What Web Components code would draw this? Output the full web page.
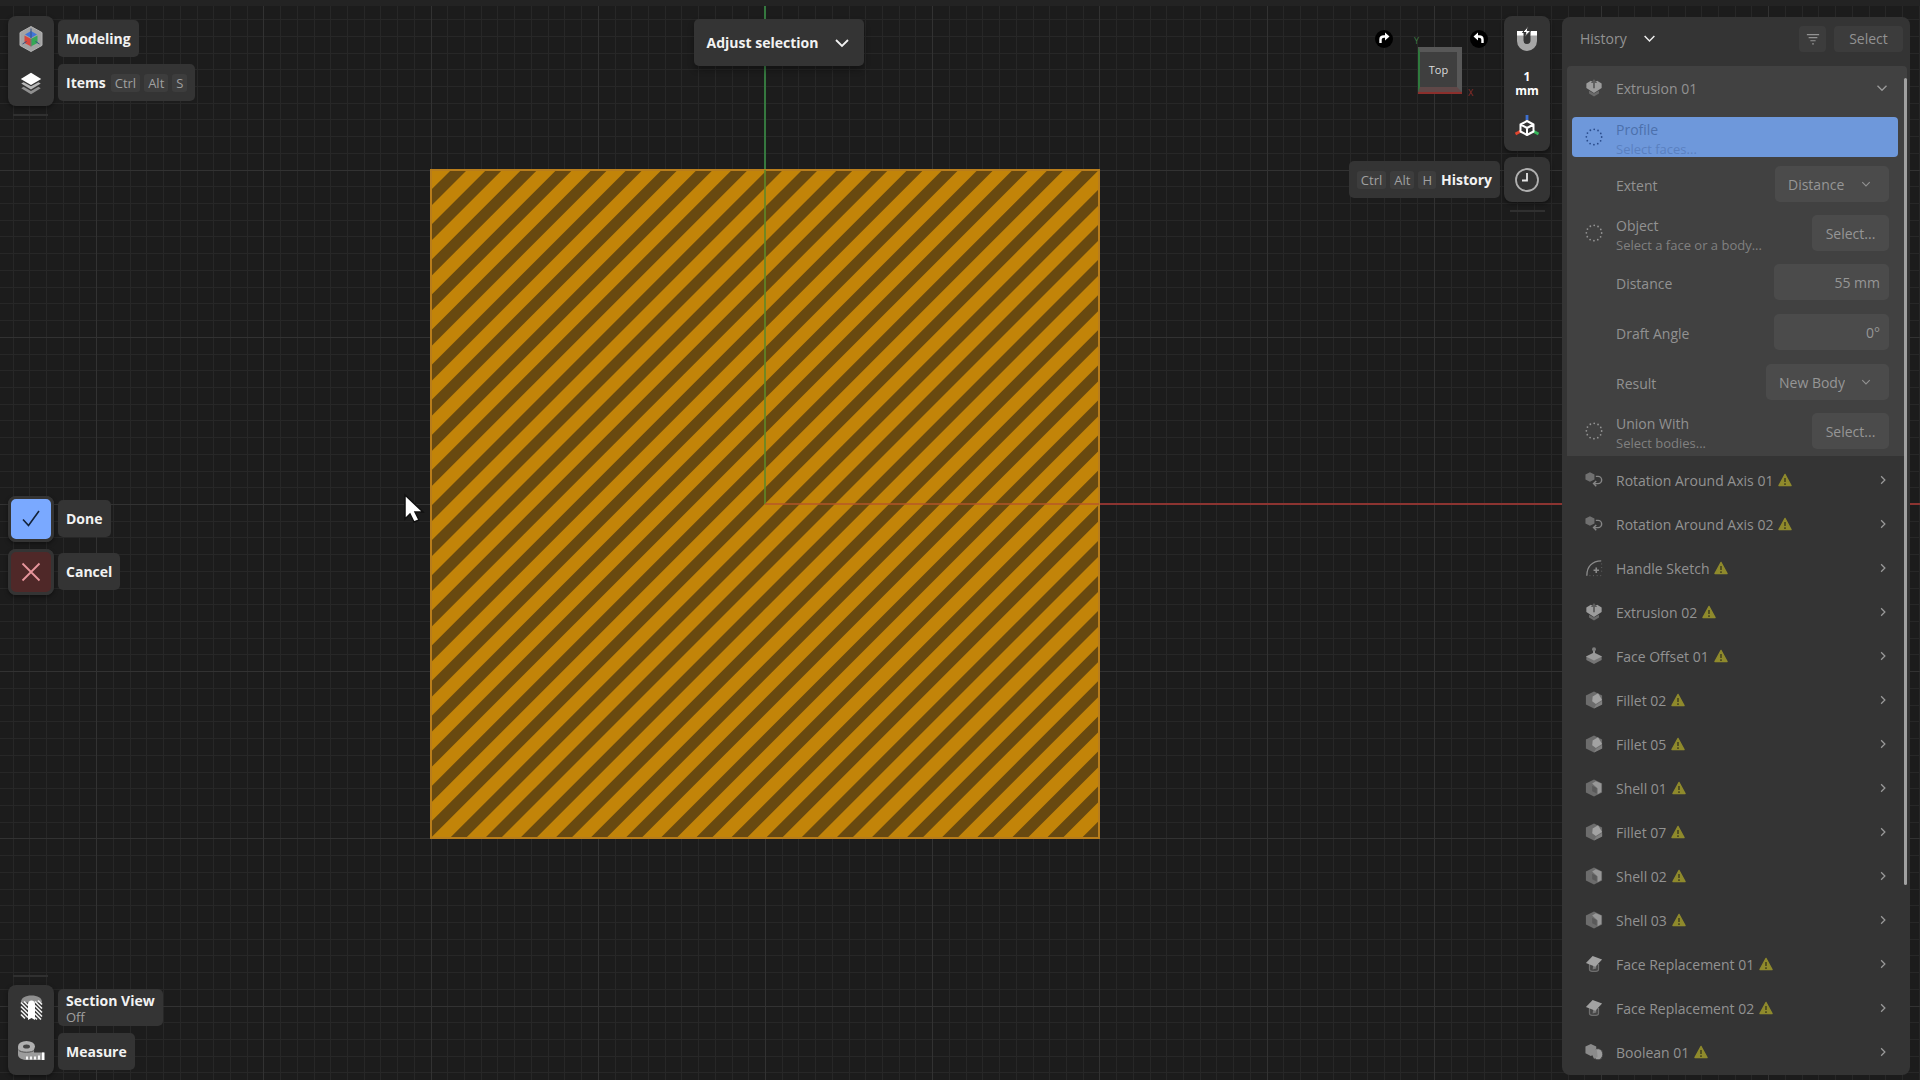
<!DOCTYPE html>
<html lang="en">
<head>
<meta charset="utf-8">
<title>Modeling</title>
<style>
  body {
    margin: 0;
    background: #1c1c1c;
    font-family: "Segoe UI", "Open Sans", "Noto Sans", sans-serif;
    font-size: 14px;
    color: #f2f2f2;
  }
</style>
</head>
<body>
<modeling-app></modeling-app>

<script>
/* =======================
   DATA
   ======================= */
const steps = [
  { icon: "rotate", name: "Rotation Around Axis 01" },
  { icon: "rotate", name: "Rotation Around Axis 02" },
  { icon: "sketch", name: "Handle Sketch" },
  { icon: "extrude", name: "Extrusion 02" },
  { icon: "offset", name: "Face Offset 01" },
  { icon: "fillet", name: "Fillet 02" },
  { icon: "fillet", name: "Fillet 05" },
  { icon: "shell", name: "Shell 01" },
  { icon: "fillet", name: "Fillet 07" },
  { icon: "shell", name: "Shell 02" },
  { icon: "shell", name: "Shell 03" },
  { icon: "replace", name: "Face Replacement 01" },
  { icon: "replace", name: "Face Replacement 02" },
  { icon: "boolean", name: "Boolean 01" },
];

// viewBox size, then the drawing
const icons = {
  logo: [28, `
    <path d="M14 1.5 25 7.6v12.8L14 26.5 3 20.400V7.600z" fill="#a3a3a3" stroke="#b4b4b4"/>
    <path d="M14 6 20 9.500 14 13 8 9.500z" fill="#3f74d8"/>
    <path d="M7.500 10.500 13.700 13.800v7.500L7.500 18z" fill="#d8463c"/>
    <path d="M20.500 10.500 14.300 13.800v7.500L20.500 18z" fill="#35a956"/>
    <path d="M14 3.500V13M5.500 19l4-2.500M22.500 19l-4-2.500" stroke="#34517f" fill="none"/>
    <path d="M14 13.500v8" stroke="#666" fill="none"/>`],
  layers: [28, `
    <path d="M3.500 18.500 6 17l8 4.500 8-4.500 2.500 1.500L14 25z" fill="#8f8f8f"/>
    <path d="M3.500 13.500 6 12l8 4.500 8-4.500 2.500 1.500L14 20z" fill="#b8b8b8"/>
    <path d="M14 2 25 8.500 14 15 3 8.500z" fill="#fff"/>`],
  check: [28, `<path d="m6 14.500 5.500 6L22 6" fill="none" stroke="#132238" stroke-width="1.600"/>`],
  cross: [28, `<path d="m5.500 5.500 17 17m0-17-17 17" fill="none" stroke="#e8959c" stroke-width="1.800"/>`],
  section: [28, `
    <path d="M4 8.500C4 3.500 8.500 1.500 14.500 1.500S25 3.500 25 8.500z" fill="#8f8f8f"/>
    <path d="M11 26V10c0-2 1.500-3.500 3.500-3.500S18 8 18 10v16l-3.500-2z" fill="#fff"/>
    <path d="m7 7.500 4 4m-7-3 7 7m-7-3 7 7m-7-3 7 7m-7-3 4 4M18 7.500l7 7m-7-3 7 7m-7-3 7 7m-7-3 6 6m-6-2 2 2M21 6.500l4 4" stroke="#f4f4f4" stroke-width="1.600" fill="none"/>`],
  measure: [28, `
    <path d="M1 8v7.500c0 4 5 5.500 9 5.500h17v-7.500H17V8z" fill="#9c9c9c"/>
    <ellipse cx="9.500" cy="7.500" rx="8.500" ry="5.500" fill="#b0b0b0"/>
    <ellipse cx="9.500" cy="7.500" rx="3.500" ry="2" fill="#444"/>
    <path d="M1.500 11c2 3 14 3 16 0" fill="none" stroke="#555"/>
    <path d="M10 17.500v3m4-3v3m4-3v3m4-4v4" stroke="#fff" stroke-width="1.800"/>
    <path d="M25 13.500h2.500V21H25z" fill="#fff"/>`],
  magnet: [28, `
    <path d="M4 10h6.500v5.500a3.500 3.500 0 0 0 7 0V10H24v6a10 10 0 0 1-20 0z" fill="#a6a6a6"/>
    <path d="M4 6h6.500v4.500H4zM17.500 6H24v4.500h-6.500z" fill="#fff"/>
    <path d="m15.500 1-6 6.500h3.500L11.500 12l6.500-6.500h-3.800z" fill="#fff" stroke="#343434"/>`],
  axes: [28, `
    <path d="M14 0v5" stroke="#3d6fd0" stroke-width="2.800"/>
    <path d="m8 16-5.500 3" stroke="#e0452e" stroke-width="2.800"/>
    <path d="m20 16 5.500 3" stroke="#35b85a" stroke-width="2.800"/>
    <path d="m14 6 6.500 3.500v7L14 20l-6.500-3.500v-7zM7.500 9.500 14 13l6.500-3.500M14 13v7" fill="#343434" stroke="#fff" stroke-width="2" stroke-linejoin="round"/>`],
  clock: [28, `
    <circle cx="14" cy="14" r="11" fill="none" stroke="#b0b0b0" stroke-width="1.800"/>
    <path d="M14 7v7.500H9" fill="none" stroke="#e6e6e6" stroke-width="1.800"/>`],
  down: [16, `<path d="m2 5 6 6 6-6" fill="none" stroke="currentColor" stroke-width="1.800"/>`],
  right: [16, `<path d="m5 2 6 6-6 6" fill="none" stroke="currentColor" stroke-width="2"/>`],
  filter: [16, `<path d="M1 3h14M3 6.500h10M5 10h6M7 13.500h2" stroke="currentColor" stroke-width="1.400"/>`],
  ring: [20, `<circle cx="10" cy="10" r="8.500" fill="none" stroke="currentColor" stroke-width="2" stroke-linecap="round" stroke-dasharray="0 4.450"/>`],
  extrude: [20, `
    <path d="M4.500 13 10 16l5.500-3v3L10 19.500 4.500 16z" fill="#6a6a6a"/>
    <path d="M1.500 5 6.500 2 10 4l3.500-2 5 3v5L10 15.500 1.500 10z" fill="#9c9c9c"/>
    <path d="M10 0 6.500 4.500H9V10l1 .5 1-.5V4.500h2.500z" fill="#5c5c5c"/>`],
  rotate: [20, `
    <path d="m5.500 1.500 5 2.500v5.500l-5 2.500-5-2.500V4z" fill="#707070"/>
    <path d="M12 6h2.500a3.800 3.800 0 0 1 0 8H9.500m3-3-3 3 3 3" fill="none" stroke="#858585" stroke-width="1.600"/>`],
  sketch: [20, `
    <path d="M2 18.500C2 8.500 8 2 18 2" fill="none" stroke="#8b8b8b" stroke-width="1.500"/>
    <path d="M5 18.500h14M18.500 5v12" fill="none" stroke="#6a6a6a" stroke-dasharray="1 3"/>
    <path d="M12.500 9.500v6m-3-3h6" stroke="#8b8b8b" stroke-width="1.800"/>`],
  offset: [20, `
    <path d="M1.500 11c0-2 17-2 17 0v3.500L10 19l-8.500-4.500z" fill="#747474"/>
    <path d="m10 6 9 4.500-9 4.500-9-4.500z" fill="#9a9a9a"/>
    <path d="M10 10V4" stroke="#9a9a9a" stroke-width="2"/>
    <circle cx="10" cy="2.500" r="2.200" fill="#7e7e7e"/>`],
  fillet: [20, `
    <path d="m10 .5 9 4.500v10l-9 4.500L1 15V5z" fill="#6c6c6c"/>
    <path d="m8.500 6 6-3.500L19 10l-7 4.500-4-3z" fill="#a2a2a2"/>
    <path d="m12 15.500 7-4.500v4l-9 4.500z" fill="#808080"/>`],
  shell: [20, `
    <path d="m10 .5 9 4.500v10l-9 4.500L1 15V5z" fill="#6c6c6c"/>
    <path d="m8 5 4-2.500L18 5v9.500L14 17v-6.500z" fill="#979797"/>
    <path d="M8 7.500 13 10v6l-5-2.500z" fill="#595959"/>`],
  replace: [20, `
    <path d="M5 10v6c0 3 10 3 10 0v-6" fill="#444" stroke="#6e6e6e" stroke-width="1.400"/>
    <path d="m9 12-.5 4 4-1V11z" fill="#777"/>
    <path d="M1 9 8.500 1l10.500 4-7.500 8z" fill="#a2a2a2"/>`],
  boolean: [20, `
    <path d="m6.500 1 6 3v7.500l-6 3-6-3V4z" fill="#8b8b8b"/>
    <ellipse cx="14.500" cy="12.500" rx="5.200" ry="6.200" fill="#9c9c9c" stroke="#444"/>
    <path d="m6 9 7-2.500 1 9-4 2z" fill="#8b8b8b"/>`],
  warning: [14, `
    <path d="M7 1.500 13 12.500H1z" fill="#8f8a2c" stroke="#8f8a2c" stroke-width="1.500" stroke-linejoin="round"/>
    <path d="M7 5v4m0 1.200V12" stroke="#45431f" stroke-width="1.600"/>`],
  turnRight: [18, `
    <circle cx="9" cy="9" r="9" fill="#000"/>
    <path d="M5.500 13V9.500c0-2 1.500-3 3.500-3h2" fill="none" stroke="#fff" stroke-width="2.400"/>
    <path d="m10 2.500 4.500 4L10 10.500z" fill="#fff"/>`],
  turnLeft: [18, `
    <circle cx="9" cy="9" r="9" fill="#000"/>
    <path d="M12.500 13V9.500c0-2-1.500-3-3.500-3H7" fill="none" stroke="#fff" stroke-width="2.400"/>
    <path d="m8 2.500-4.500 4 4.500 4z" fill="#fff"/>`],
};

/* =======================
   CUSTOM ELEMENT: Icon
   ======================= */
class UiIcon extends HTMLElement {
  connectedCallback() {
    const [box, shapes] = icons[this.getAttribute("name")];
    const size = this.getAttribute("size") || box;
    this.attachShadow({ mode: "open" }).innerHTML = `
      <style>
        :host { display: block; flex: none; }
        svg { display: block; }
      </style>
      <svg width="${size}" height="${size}" viewBox="0 0 ${box} ${box}" aria-hidden="true">${shapes}</svg>
    `;
  }
}
customElements.define("ui-icon", UiIcon);

/* =======================
   CUSTOM ELEMENT: Canvas with grid and sketch
   ======================= */
class ViewportCanvas extends HTMLElement {
  connectedCallback() {
    const originX = 765;
    const originY = 504;
    const cell = 167.2 / 10;
    let minor = "";
    let major = "";
    for (let i = -50; i <= 100; i++) {
      const x = Math.round(originX + i * cell);
      const y = Math.round(originY + i * cell);
      const line = `M${x} 0V4000M0 ${y}H4000`;
      if (i % 10 === 0) major += line;
      else minor += line;
    }

    // 45 degree hatch, clipped to the selected face
    let hatch = "";
    for (let k = 0; k < 38; k++) {
      const sum = 629 + k * 35.1;
      hatch += `M${sum - 100} 100L${sum - 900} 900`;
    }

    this.attachShadow({ mode: "open" }).innerHTML = `
      <style>
        :host { display: block; position: absolute; inset: 0; overflow: hidden; border-top: 6px solid #232323; }
        svg { display: block; width: 100%; height: 1200px; margin-top: -6px; }
      </style>
      <svg aria-hidden="true" shape-rendering="crispEdges">
        <clipPath id="face"><rect x="431" y="170" width="668" height="668"/></clipPath>
        <path d="${minor}" fill="none" stroke="#272727"/>
        <path d="${major}" fill="none" stroke="#323232"/>
        <path d="M765 0V504" stroke="#35783f" stroke-width="2"/>
        <path d="M765 504H4000" stroke="#8c3431" stroke-width="2"/>
        <g shape-rendering="auto">
          <rect x="431" y="170" width="668" height="668" fill="#c28409"/>
          <path d="${hatch}" stroke="#684910" stroke-width="11.300" clip-path="url(#face)"/>
          <rect x="431" y="170" width="668" height="668" fill="none" stroke="#b87d1c" stroke-width="2"/>
        </g>
        <path d="M765 170V504" stroke="#5d8a28" stroke-width="2" opacity=".8"/>
        <path d="M765 504H1099" stroke="#b8552a" stroke-width="2" opacity=".7"/>
        <path d="M405 495v24l5-5 4 8 5-2-4-8h8z" fill="#fff" stroke="#111" stroke-width="1.500" shape-rendering="auto"/>
      </svg>
    `;
  }
}
customElements.define("viewport-canvas", ViewportCanvas);

/* =======================
   CUSTOM ELEMENT: Tool Label (caption beside a tool)
   ======================= */
class ToolLabel extends HTMLElement {
  connectedCallback() {
    const keys = (this.getAttribute("keys") || "").split(" ").filter(Boolean);
    const note = this.getAttribute("note");
    this.attachShadow({ mode: "open" }).innerHTML = `
      <style>
        :host {
          display: flex;
          align-items: center;
          gap: 5px;
          width: max-content;
          height: 37px;
          padding: 0 8px;
          box-sizing: border-box;
          border-radius: 5px;
          background: #343434;
          font-size: 14px;
          font-weight: 700;
          line-height: 18px;
        }
        :host([reverse]) { flex-direction: row-reverse; }
        .keys { display: flex; gap: 4px; }
        kbd {
          padding: 0 4px;
          border-radius: 3px;
          background: #3d3d3d;
          color: #a0a0a0;
          font: inherit;
          font-size: 13px;
          font-weight: 400;
        }
        small { display: block; font-size: 13px; font-weight: 400; line-height: 14px; color: #a0a0a0; }
      </style>
      <div><slot></slot>${note ? `<small>${note}</small>` : ""}</div>
      ${keys.length ? `<div class="keys">${keys.map((key) => `<kbd>${key}</kbd>`).join("")}</div>` : ""}
    `;
  }
}
customElements.define("tool-label", ToolLabel);

/* =======================
   CUSTOM ELEMENT: Tool Rail (column of tools, captions at its side)
   ======================= */
class ToolRail extends HTMLElement {
  connectedCallback() {
    this.attachShadow({ mode: "open" }).innerHTML = `
      <style>
        :host { display: flex; gap: 4px; align-items: flex-start; }
        .rail { width: 46px; border-radius: 8px; background: #343434; box-shadow: 0 2px 4px #0006; }
        .labels { display: flex; flex-direction: column; gap: 7px; padding-top: 4px; }
        ::slotted([slot="before"]) { margin-top: 4px; }
        ::slotted(button) {
          display: flex;
          flex-direction: column;
          align-items: center;
          justify-content: center;
          width: 46px;
          height: 45px;
          padding: 0;
          border: 0;
          background: none;
          color: #fff;
          font: inherit;
          font-size: 12px;
          font-weight: 700;
          line-height: 14px;
        }
        ::slotted(.done), ::slotted(.cancel) {
          height: 46px !important;
          border: 3px solid #343434 !important;
          border-radius: 8px;
        }
        ::slotted(.done) { background: #7aa9ff !important; }
        ::slotted(.cancel) { background: #4f2828 !important; }
      </style>
      <slot name="before"></slot>
      <div class="rail"><slot></slot></div>
      <div class="labels"><slot name="labels"></slot></div>
    `;
    if (!this.querySelector("[slot=labels]")) this.shadowRoot.querySelector(".labels").remove();
  }
}
customElements.define("tool-rail", ToolRail);

/* =======================
   CUSTOM ELEMENT: View Cube
   ======================= */
class ViewCube extends HTMLElement {
  connectedCallback() {
    this.attachShadow({ mode: "open" }).innerHTML = `
      <style>
        :host { display: flex; align-items: flex-start; padding-top: 14px; margin-right: 16px; }
        button { padding: 0; border: 0; background: none; font: inherit; color: #dcdcdc; }
        .axes { display: grid; grid-template-columns: 44px 14px; padding-top: 5px; margin: 0 -6px 0 25px; }
        .y { grid-column: 1 / 3; margin-left: -4px; color: #3d7a42; font-size: 9px; line-height: 12px; }
        .face {
          width: 44px;
          height: 45px;
          box-sizing: border-box;
          border: 5px solid #585858;
          border-left: 2px solid #2f7a3d;
          border-bottom-color: #604848;
          background: #3f3f3f;
          box-shadow: 0 2px 0 #8c2f2c;
          font-size: 11px;
        }
        .x { align-self: end; margin: 0 0 -7px 6px; color: #8c2f2c; font-size: 9px; line-height: 12px; }
      </style>
      <button aria-label="Rotate clockwise"><ui-icon name="turnRight"></ui-icon></button>
      <div class="axes">
        <span class="y">Y</span>
        <button class="face">Top</button>
        <span class="x">X</span>
      </div>
      <button aria-label="Rotate counterclockwise"><ui-icon name="turnLeft"></ui-icon></button>
    `;
  }
}
customElements.define("view-cube", ViewCube);

/* =======================
   CUSTOM ELEMENT: History Step (collapsed row)
   ======================= */
class HistoryStep extends HTMLElement {
  connectedCallback() {
    const open = this.hasAttribute("open");
    this.attachShadow({ mode: "open" }).innerHTML = `
      <style>
        :host { display: block; }
        button {
          display: flex;
          align-items: center;
          width: 100%;
          height: 44px;
          padding: 0 19px 0 18px;
          border: 0;
          background: none;
          color: inherit;
          font: inherit;
          text-align: left;
        }
        .name { margin: 0 5px 0 13px; }
        .arrow { margin-left: auto; color: #999; }
      </style>
      <button aria-expanded="${open}">
        <ui-icon name="${this.getAttribute("icon")}" size="18"></ui-icon>
        <span class="name"><slot></slot></span>
        ${open ? "" : `<ui-icon name="warning"></ui-icon>`}
        <ui-icon class="arrow" name="${open ? "down" : "right"}" size="${open ? 12 : 10}"></ui-icon>
      </button>
    `;
  }
}
customElements.define("history-step", HistoryStep);

/* =======================
   CUSTOM ELEMENT: Property Row
   type: select | number | pick
   ======================= */
class PropertyRow extends HTMLElement {
  connectedCallback() {
    const type = this.getAttribute("type");
    const label = this.getAttribute("label");
    const value = this.getAttribute("value");
    const hint = this.getAttribute("hint");

    let control = "";
    if (type === "select") {
      control = `
        <div class="select">
          <select id="control"><option>${value}</option></select>
          <ui-icon name="down" size="10"></ui-icon>
        </div>`;
    } else if (type === "number") {
      control = `<input id="control" type="text" value="${value}">`;
    } else if (value) {
      control = `<button id="control">${value}</button>`;
    }

    this.attachShadow({ mode: "open" }).innerHTML = `
      <style>
        :host { display: flex; align-items: center; height: 50px; padding: 0 18px 0 49px; }
        :host([type="pick"]) { height: 48px; padding-left: 18px; }
        :host([active]) {
          height: 40px;
          margin: 7px 9px 2px 5px;
          padding: 0 13px;
          border-radius: 4px;
          background: #6e98db;
          color: #4c70ac;
        }
        ui-icon { color: #929292; }
        :host([active]) ui-icon { color: #2b4d8c; }
        label, .text { flex: 1; padding-top: 3px; line-height: 20px; }
        :host([type="pick"]) .text { margin-left: 13px; }
        small { display: block; font-size: 13px; line-height: 18px; color: #808080; }
        :host([active]) small { color: #5a80c0; }
        select, input, button {
          height: 36px;
          box-sizing: border-box;
          border: 0;
          border-radius: 5px;
          background: #4b4b4b;
          color: #969696;
          font: inherit;
        }
        .select { display: grid; align-items: center; }
        .select > * { grid-area: 1 / 1; }
        .select ui-icon { justify-self: end; margin-right: 18px; pointer-events: none; }
        select { appearance: none; padding: 0 44px 0 13px; }
        input { width: 115px; padding: 0 9px; text-align: right; }
        button { width: 77px; padding: 0; }
      </style>
      ${type === "pick" ? `<ui-icon name="ring" size="18"></ui-icon>` : ""}
      ${hint ? `<div class="text">${label}<small>${hint}</small></div>` : `<label for="control">${label}</label>`}
      ${control}
    `;
    const button = this.shadowRoot.querySelector("button");
    if (button) button.setAttribute("aria-label", `${label}: ${value}`);
  }
}
customElements.define("property-row", PropertyRow);

/* =======================
   CUSTOM ELEMENT: History Panel
   ======================= */
class HistoryPanel extends HTMLElement {
  connectedCallback() {
    this.attachShadow({ mode: "open" }).innerHTML = `
      <style>
        :host {
          display: flex;
          flex-direction: column;
          overflow: hidden;
          border-radius: 8px;
          background: #343434;
          color: #929292;
          font-weight: 500;
        }
        header { display: flex; align-items: center; gap: 8px; height: 43px; padding: 0 7px 0 18px; }
        header button {
          display: flex;
          align-items: center;
          justify-content: center;
          height: 26px;
          padding: 0;
          border: 0;
          border-radius: 4px;
          background: #3c3c3c;
          color: inherit;
          font: inherit;
        }
        header .title { gap: 16px; margin-right: auto; background: none; }
        .title ui-icon { color: #eee; }
        .filter { width: 27px; }
        .choose { width: 69px; }
        .body { display: flex; flex: 1; min-height: 0; padding: 6px 3px 0 5px; overflow: hidden; }
        .list { flex: 1; margin-right: -3px; }
        .group { padding-bottom: 1px; margin-bottom: 2px; border-radius: 4px 4px 0 0; background: #414141; }
        .thumb { width: 3px; height: 80%; margin-top: 12px; border-radius: 2px; background: #a0a0a0; z-index: 1; }
      </style>
      <header>
        <button class="title">History <ui-icon name="down" size="13"></ui-icon></button>
        <button class="filter" aria-label="Filter"><ui-icon name="filter" size="14"></ui-icon></button>
        <button class="choose">Select</button>
      </header>
      <div class="body">
        <div class="list">
          <div class="group">
            <history-step icon="extrude" open>Extrusion 01</history-step>
            <property-row active type="pick" label="Profile" hint="Select faces..."></property-row>
            <property-row type="select" label="Extent" value="Distance"></property-row>
            <property-row type="pick" label="Object" hint="Select a face or a body..." value="Select..."></property-row>
            <property-row type="number" label="Distance" value="55 mm"></property-row>
            <property-row type="number" label="Draft Angle" value="0°"></property-row>
            <property-row type="select" label="Result" value="New Body"></property-row>
            <property-row type="pick" label="Union With" hint="Select bodies..." value="Select..."></property-row>
          </div>
          ${steps.map((step) => `<history-step icon="${step.icon}">${step.name}</history-step>`).join("")}
        </div>
        <div class="thumb"></div>
      </div>
    `;
  }
}
customElements.define("history-panel", HistoryPanel);

/* =======================
   CUSTOM ELEMENT: App
   ======================= */
class ModelingApp extends HTMLElement {
  connectedCallback() {
    this.attachShadow({ mode: "open" }).innerHTML = `
      <style>
        :host {
          display: grid;
          grid-template-columns: 1fr 348px;
          gap: 4px;
          position: relative;
          height: 100vh;
          box-sizing: border-box;
          padding: 16px 10px 5px 8px;
          overflow: hidden;
        }
        .stage { display: grid; grid-template-columns: 1fr auto 1fr; position: relative; padding-right: 8px; }
        .left { display: flex; flex-direction: column; justify-content: space-between; }
        .actions { display: flex; flex-direction: column; gap: 7px; }
        .grip { width: 35px; height: 2px; margin: 8px 0 8px 5px; background: #303030; }
        .right { display: flex; flex-direction: column; align-items: flex-end; gap: 6px; }
        .top { display: flex; align-items: flex-start; }
        .right .grip { margin: 2px 5px 0 0; }
        .mode {
          display: flex;
          align-items: center;
          gap: 16px;
          height: 47px;
          margin-top: 3px;
          padding: 0 14px 0 13px;
          border: 0;
          border-radius: 5px;
          background: #343434;
          box-shadow: 0 4px 6px #0005;
          color: #f2f2f2;
          font: inherit;
          font-weight: 700;
        }
        history-panel { position: relative; margin-top: 1px; }
      </style>
      <viewport-canvas></viewport-canvas>
      <main class="stage">
        <div class="left">
          <div>
            <tool-rail>
              <button aria-label="Modeling"><ui-icon name="logo"></ui-icon></button>
              <button aria-label="Items"><ui-icon name="layers" size="26"></ui-icon></button>
              <tool-label slot="labels">Modeling</tool-label>
              <tool-label slot="labels" keys="Ctrl Alt S">Items</tool-label>
            </tool-rail>
            <div class="grip"></div>
          </div>
          <div class="actions">
            <tool-rail>
              <button class="done" aria-label="Done"><ui-icon name="check"></ui-icon></button>
              <tool-label slot="labels">Done</tool-label>
            </tool-rail>
            <tool-rail>
              <button class="cancel" aria-label="Cancel"><ui-icon name="cross"></ui-icon></button>
              <tool-label slot="labels">Cancel</tool-label>
            </tool-rail>
          </div>
          <div>
            <div class="grip"></div>
            <tool-rail>
              <button aria-label="Section View"><ui-icon name="section"></ui-icon></button>
              <button aria-label="Measure"><ui-icon name="measure"></ui-icon></button>
              <tool-label slot="labels" note="Off">Section View</tool-label>
              <tool-label slot="labels">Measure</tool-label>
            </tool-rail>
          </div>
        </div>
        <div>
          <button class="mode">Adjust selection <ui-icon name="down" size="16"></ui-icon></button>
        </div>
        <div class="right">
          <div class="top">
            <view-cube></view-cube>
            <tool-rail>
              <button aria-label="Snapping"><ui-icon name="magnet"></ui-icon></button>
              <button><span>1</span><span>mm</span></button>
              <button aria-label="Axes"><ui-icon name="axes"></ui-icon></button>
            </tool-rail>
          </div>
          <tool-rail>
            <tool-label slot="before" reverse keys="Ctrl Alt H">History</tool-label>
            <button aria-label="History"><ui-icon name="clock"></ui-icon></button>
          </tool-rail>
          <div class="grip"></div>
        </div>
      </main>
      <history-panel></history-panel>
    `;
  }
}
customElements.define("modeling-app", ModelingApp);
</script>
</body>
</html>
